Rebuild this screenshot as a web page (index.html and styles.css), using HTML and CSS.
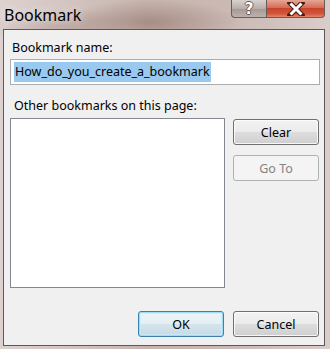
FILE: index.html
```html
<!DOCTYPE html>
<html lang="en">
<head>
    <meta charset="UTF-8">
    <title>Bookmark</title>
    <link rel="stylesheet" href="styles.css">
</head>
<body>
    <div class="window">
        <div class="titlebar">
            <span class="title">Bookmark</span>
            <div class="caption-buttons">
                <div class="cap-btn help"><span>?</span></div>
                <div class="cap-btn close">
                    <svg width="18" height="14" viewBox="0 0 18 14">
                        <path d="M3 1 L15 13 M15 1 L3 13" stroke="#4a1a12" stroke-width="5" stroke-linecap="square"/>
                        <path d="M3.5 1.5 L14.5 12.5 M14.5 1.5 L3.5 12.5" stroke="#ffffff" stroke-width="3"/>
                    </svg>
                </div>
            </div>
        </div>
        <div class="client">
            <div class="label">Bookmark name:</div>
            <div class="textbox"><span class="selected">How_do_you_create_a_bookmark</span></div>
            <div class="label other">Other bookmarks on this page:</div>
            <div class="list-row">
                <div class="listbox"></div>
                <div class="side-buttons">
                    <button class="btn">Clear</button>
                    <button class="btn" disabled>Go To</button>
                </div>
            </div>
            <div class="footer">
                <button class="btn default">OK</button>
                <button class="btn">Cancel</button>
            </div>
        </div>
    </div>
</body>
</html>
```

FILE: styles.css
```css
body {
    margin: 0;
    font-family: "Noto Sans", "Open Sans", sans-serif;
}
.window {
    width: 330px;
    height: 349px;
    box-sizing: border-box;
    padding: 0 5px 3px 3px;
    background:
        radial-gradient(ellipse 90px 22px at 150px 22px, rgba(140,110,100,0.55), rgba(140,110,100,0) 100%),
        radial-gradient(ellipse 70px 18px at 60px 26px, rgba(150,120,110,0.35), rgba(150,120,110,0) 100%),
        linear-gradient(to right, #ddd2cf, #c7b4ae 45%, #cbb9b4 70%, #d9cdca);
    display: flex;
    flex-direction: column;
}
.titlebar {
    height: 29px;
    display: flex;
    justify-content: space-between;
    align-items: flex-start;
}
.title {
    font-size: 16px;
    color: #000;
    margin: 4px 0 0 1px;
    text-shadow: 0 0 8px rgba(255,255,255,0.8);
}
.caption-buttons {
    display: flex;
}
.cap-btn {
    height: 18px;
    box-sizing: border-box;
    border: 1px solid #6b5a56;
    border-top: none;
    display: flex;
    align-items: center;
    justify-content: center;
}
.help {
    width: 35px;
    border-radius: 0 0 0 4px;
    border-right: none;
    background: linear-gradient(#d9d2d0, #b9aeab 50%, #a69794 51%, #bcb1ae);
}
.help span {
    color: #fff;
    font-family: "DejaVu Sans", sans-serif;
    font-weight: bold;
    font-size: 15px;
    line-height: 17px;
    padding-top: 1px;
    text-shadow: -1px 0 #6a5a56, 1px 0 #6a5a56, 0 -1px #6a5a56, 0 1px #6a5a56;
}
.close {
    width: 59px;
    border-radius: 0 0 4px 0;
    background: linear-gradient(#e5a696, #d56d57 45%, #c8452b 50%, #d0553b 80%, #e3866c);
}
.client {
    flex: 1;
    background: #f0f0f0;
    border: 1px solid #5e5858;
    padding: 10px 5px 0 6px;
    font-size: 12.5px;
    color: #000;
}
.label {
    line-height: 16px;
    margin-left: 2px;
}
.label.other {
    margin: 13px 0 4px 4px;
}
.textbox {
    margin-top: 3px;
    height: 26px;
    box-sizing: border-box;
    border: 1px solid #abadb3;
    border-top-color: #acacac;
    background: #fff;
    padding: 2px 3px;
    display: flex;
    width: 310px;
}
.selected {
    background: #99c9ef;
    line-height: 20px;
    padding: 0 1px;
}
.list-row {
    display: flex;
    gap: 8px;
}
.listbox {
    width: 215px;
    height: 170px;
    box-sizing: border-box;
    border: 1px solid #828790;
    background: #fff;
}
.side-buttons {
    display: flex;
    flex-direction: column;
    gap: 10px;
    padding-top: 1px;
}
.btn {
    width: 86px;
    height: 26px;
    box-sizing: border-box;
    border: 1px solid #707070;
    border-radius: 3px;
    background: linear-gradient(#f2f2f2, #ebebeb 50%, #dddddd 51%, #cfcfcf);
    box-shadow: inset 0 0 0 1px rgba(255,255,255,0.8);
    font-family: inherit;
    font-size: 12.5px;
    color: #000;
    padding: 0;
}
.btn:disabled {
    border-color: #adb2b5;
    background: #f4f4f4;
    color: #838383;
    box-shadow: none;
}
.btn.default {
    border-color: #3c7fb1;
    box-shadow: inset 0 0 0 1px #9fdcf6, inset 0 0 0 2px rgba(200,236,252,0.7);
    background: linear-gradient(#eef5f9, #e4eef4 50%, #d5e4ec 51%, #c9dae4);
}
.footer {
    display: flex;
    justify-content: flex-end;
    gap: 9px;
    margin-top: 23px;
}
```
